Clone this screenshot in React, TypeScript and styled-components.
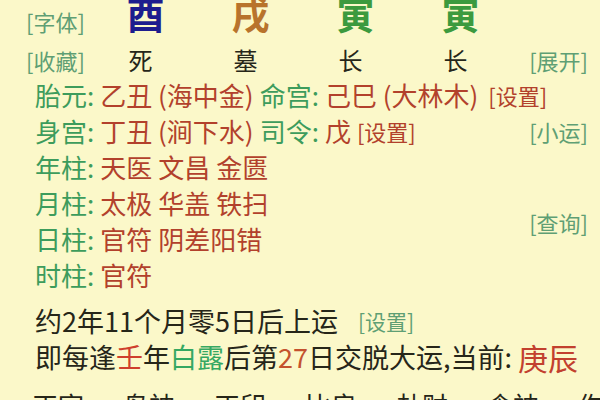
import styled, { createGlobalStyle } from "styled-components";

const Colors = {
  bg: "#fbf8c9",
  label: "#3d9c5c",
  value: "#b2412c",
  link: "#5f9f74",
  ink: "#262619",
  you: "#1d1d8e",
  xu: "#b8732c",
  yin: "#3c9a3e",
};

const GlobalStyle = createGlobalStyle`
  html, body {
    margin: 0;
    padding: 0;
    background: ${Colors.bg};
    overflow: hidden;
  }
  body {
    font-family: "Noto Sans CJK SC", "Noto Sans", sans-serif;
  }
`;

const Page = styled.div`
  width: 600px;
  height: 400px;
  box-sizing: border-box;
  padding: 0 12px 0 26px;
  background: ${Colors.bg};
  overflow: hidden;
`;

const Header = styled.div`
  display: grid;
  grid-template-columns: 62px repeat(4, 105px) 1fr;
  grid-template-rows: 42px 35px;
  align-items: center;
`;

type LinkProps = { $tone?: "green" | "red"; $size?: number };
const Link = styled.span<LinkProps>`
  font-size: ${(p) => p.$size ?? 22}px;
  line-height: 1;
  color: ${(p) => (p.$tone === "red" ? Colors.value : Colors.link)};
  white-space: nowrap;
`;

const RightLink = styled(Link)`
  justify-self: end;
`;

type PillarProps = { $color: string };
const Pillar = styled.div<PillarProps>`
  align-self: start;
  margin-top: -6px;
  padding-left: 10px;
  text-align: center;
  font-size: 38px;
  line-height: 38px;
  font-weight: 700;
  color: ${(p) => p.$color};
`;

const Stage = styled.div`
  text-align: center;
  font-size: 24px;
  line-height: 1;
  color: ${Colors.ink};
`;

const Row = styled.div`
  padding-left: 9px;
  height: 36px;
  display: flex;
  align-items: center;
  font-size: 26px;
  line-height: 36px;
  white-space: nowrap;
`;

const Label = styled.span`
  color: ${Colors.label};
  margin-right: 6px;
`;

const Value = styled.span`
  color: ${Colors.value};
  margin-right: 6px;
`;

const Split = styled.div`
  display: flex;
`;

const Left = styled.div`
  flex: 1;
`;

const Aside = styled.div`
  display: flex;
  flex-direction: column;
  align-items: flex-end;
`;

const AsideItem = styled.div<{ $gap?: number }>`
  height: 36px;
  display: flex;
  align-items: center;
  margin-top: ${(p) => p.$gap ?? 0}px;
`;

const Dayun = styled.div`
  margin-top: 10px;
  padding-left: 9px;
`;

const Line = styled.div`
  height: 36px;
  display: flex;
  align-items: center;
  font-size: 27px;
  line-height: 36px;
  color: ${Colors.ink};
  white-space: nowrap;
`;

const Mark = styled.span<{ $color: string; $size?: number }>`
  color: ${(p) => p.$color};
  font-size: ${(p) => p.$size ?? 27}px;
`;

const Gods = styled.div`
  margin-top: 12px;
  padding-left: 6px;
  display: flex;
  gap: 39px;
  font-size: 26px;
  line-height: 36px;
  color: ${Colors.ink};
  white-space: nowrap;
`;

const pillars = [
  { char: "酉", color: Colors.you },
  { char: "戌", color: Colors.xu },
  { char: "寅", color: Colors.yin },
  { char: "寅", color: Colors.yin },
];
const stages = ["死", "墓", "长", "长"];

const shensha = [
  { label: "年柱:", items: ["天医", "文昌", "金匮"] },
  { label: "月柱:", items: ["太极", "华盖", "铁扫"] },
  { label: "日柱:", items: ["官符", "阴差阳错"] },
  { label: "时柱:", items: ["官符"] },
];

const gods = ["正官", "枭神", "正印", "比肩", "劫财", "食神", "伤官"];

function App() {
  return (
    <Page>
      <GlobalStyle />
      <Header>
        <Link>[字体]</Link>
        {pillars.map((p, i) => (
          <Pillar key={i} $color={p.color}>
            {p.char}
          </Pillar>
        ))}
        <span />
        <Link>[收藏]</Link>
        {stages.map((s, i) => (
          <Stage key={i}>{s}</Stage>
        ))}
        <RightLink>[展开]</RightLink>
      </Header>

      <Row>
        <Label>胎元:</Label>
        <Value>乙丑 (海中金)</Value>
        <Label>命宫:</Label>
        <Value>己巳 (大林木)</Value>
        <Link $tone="red" style={{ marginLeft: 4 }}>[设置]</Link>
      </Row>

      <Split>
        <Left>
          <Row>
            <Label>身宫:</Label>
            <Value>丁丑 (涧下水)</Value>
            <Label>司令:</Label>
            <Value>戊</Value>
            <Link $tone="red">[设置]</Link>
          </Row>
          {shensha.map((r) => (
            <Row key={r.label}>
              <Label>{r.label}</Label>
              {r.items.map((it) => (
                <Value key={it}>{it}</Value>
              ))}
            </Row>
          ))}
        </Left>
        <Aside>
          <AsideItem>
            <Link>[小运]</Link>
          </AsideItem>
          <AsideItem $gap={55}>
            <Link>[查询]</Link>
          </AsideItem>
        </Aside>
      </Split>

      <Dayun>
        <Line>
          约2年11个月零5日后上运
          <Link $size={21} style={{ marginLeft: 20 }}>[设置]</Link>
        </Line>
        <Line>
          即每逢<Mark $color="#cf3f2c">壬</Mark>年
          <Mark $color="#35a862">白露</Mark>后第
          <Mark $color="#c4522e">27</Mark>日交脱大运,当前:&nbsp;
          <Mark $color="#c2402e" $size={30}>庚辰</Mark>
        </Line>
      </Dayun>

      <Gods>
        {gods.map((g) => (
          <span key={g}>{g}</span>
        ))}
      </Gods>
    </Page>
  );
}

export default App;
